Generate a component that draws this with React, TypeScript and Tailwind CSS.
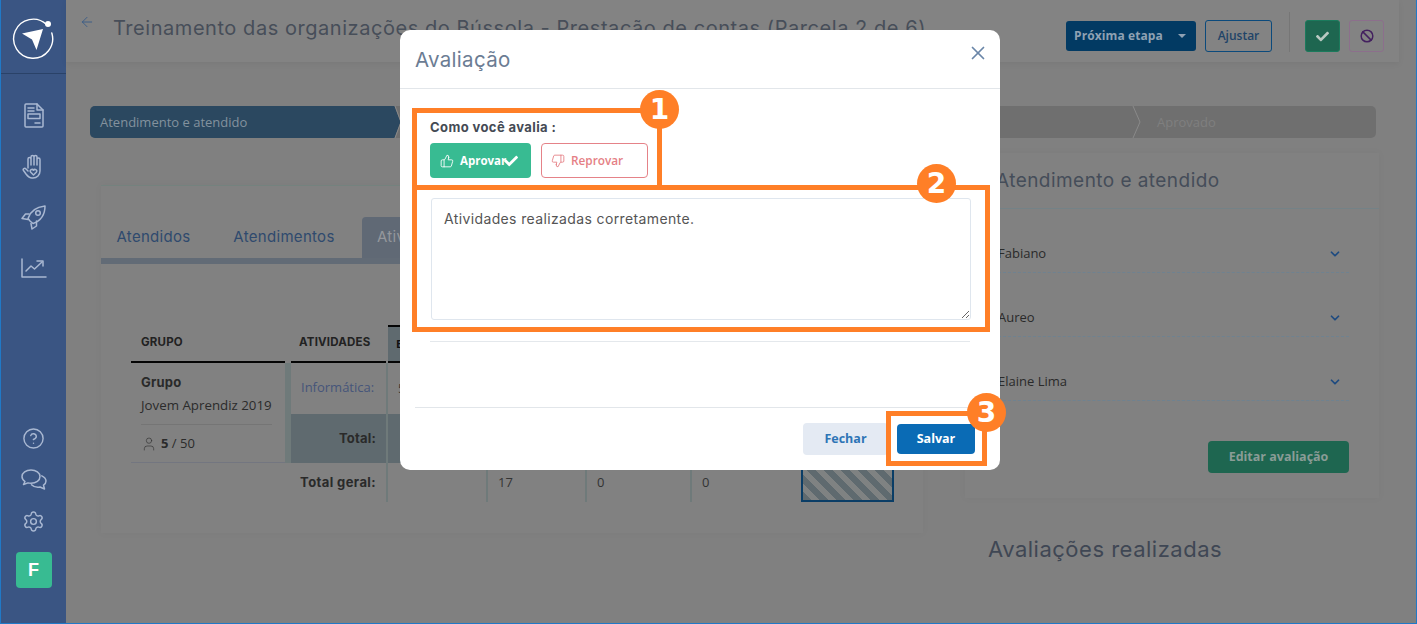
import React from 'react';
import { ArrowLeft, Ban, ChevronDown, CircleHelp, Settings, ThumbsDown, ThumbsUp, User, X } from 'lucide-react';
import { FaCheck } from 'react-icons/fa';

const heading = "font-['Inter',sans-serif]";

function Logo() {
  return (
    <svg className="mr-[2px]" width="44" height="44" viewBox="0 0 44 44" fill="none">
      <path d="M35.5 9.5A19.5 19.5 0 1 0 40.8 18" stroke="#fff" strokeWidth="1.4" strokeLinecap="round" />
      <circle cx="37" cy="9" r="3" fill="#fff" />
      <path d="M11 18.5 32 14 25.5 35 21 24.5z" fill="#fff" />
    </svg>
  );
}

function Sidebar() {
  const stroke = { stroke: '#a9b8d2', strokeWidth: 1.5, fill: 'none', strokeLinecap: 'round', strokeLinejoin: 'round' } as const;
  return (
    <aside className="flex w-[65px] shrink-0 flex-col items-center bg-[#3a5583]">
      <div className="flex h-[74px] w-full items-start justify-center border-b border-[#2a4268] pt-[15px]">
        <Logo />
      </div>
      <div className="mt-[29px] flex w-full flex-col items-center">
        <svg width="20" height="25" viewBox="0 0 20 25" {...stroke}>
          <path d="M2 1h11l6 6v16a1 1 0 0 1-1 1H2a1 1 0 0 1-1-1V2a1 1 0 0 1 1-1z" />
          <path d="M13 1v6h6M4 5h6M4 8h6M11 20h5" />
          <rect x="4" y="11" width="12" height="4.5" />
        </svg>
        <svg className="mt-[26px]" width="23" height="25" viewBox="0 0 23 25" {...stroke}>
          <path d="M6 14V5a1.5 1.5 0 0 1 3 0v6M9 11V3a1.5 1.5 0 0 1 3 0v8M12 11V3a1.5 1.5 0 0 1 3 0v8M15 11V5.5a1.5 1.5 0 0 1 3 0V17c0 4-3 7-7 7h-1c-3 0-4.500-2-6-4l-2.500-3.500c-1-1.500 1-3 2.500-1.500L6 17" />
          <path d="M11.500 21l-3-3a1.700 1.700 0 0 1 3-1.700 1.700 1.700 0 0 1 3 1.700z" />
        </svg>
        <svg className="mt-[26px]" width="25" height="25" viewBox="0 0 25 25" {...stroke}>
          <path d="M9 16l-2-2.500C9 7 15 2 24 1c0 9-5 15-12 17.500z" />
          <circle cx="17" cy="8" r="2.300" />
          <path d="M8 9H4.500L1 13.500l6 1M15.500 16v5l-4.500 3-1-5.500" />
        </svg>
        <svg className="mt-[28px]" width="26" height="20" viewBox="0 0 26 20" {...stroke}>
          <path d="M1 1v18h24M5 13l5-5 3.500 3L21 4" />
          <path d="M16 3h6v5" />
        </svg>
      </div>
      <div className="mt-[149px] flex w-full flex-col items-center">
        <CircleHelp size={23} strokeWidth={1.5} color="#a9b8d2" />
        <svg className="mt-[19px]" width="26" height="21" viewBox="0 0 26 21" {...stroke}>
          <path d="M10 1C5 1 1 3.800 1 7.500c0 2 1.200 3.800 3 5l-1.500 3 4.500-1.600c1 .3 2 .4 3 .4 5 0 9-2.900 9-6.800S15 1 10 1z" />
          <path d="M20.800 6.800C23 7.900 25 9.500 25 12c0 1.700-1 3.200-2.500 4.200l1 3.800-4.500-2c-3.500.6-6.500-.3-8.500-2.300" />
        </svg>
        <Settings className="mt-[20px]" size={23} strokeWidth={1.5} color="#a9b8d2" />
        <div className="mt-[19px] flex h-9 w-9 items-center justify-center rounded-[4px] bg-[#38bb92] font-['Liberation_Sans',sans-serif] text-[18px] font-bold text-white">
          F
        </div>
      </div>
    </aside>
  );
}

function Header() {
  return (
    <header className="relative flex h-[62px] w-[1333px] bg-[#838383] shadow-[0_2px_6px_rgba(0,0,0,0.06)]">
      <ArrowLeft className="ml-[13px] mt-[14px]" size={16} strokeWidth={1.2} color="#2f5588" />
      <h1 className={`${heading} ml-[18px] mt-[13px] h-[30px] w-[860px] whitespace-nowrap text-[20px] leading-[30px] tracking-[0.55px] text-[#474e59]`}>
        Treinamento das organizações do Bússola - Prestação de contas (Parcela 2 de 6)
      </h1>
      <div className="ml-[93px] mt-[21px] flex h-[30px] w-[130px] items-center rounded-[3px] bg-[#023a63] pl-2 font-['Open_Sans',sans-serif] text-[12px] font-bold tracking-[0.1px] text-[#8fa1b3]">
        Próxima etapa
        <span className="ml-[15px] h-0 w-0 border-x-[4px] border-t-[4px] border-x-transparent border-t-[#8fa1b3]" />
      </div>
      <div className="ml-[9px] mt-[20px] flex h-8 w-[67px] items-center justify-center rounded-[3px] border border-[#0b4a7c] font-['Open_Sans',sans-serif] text-[12px] font-semibold text-[#1f4468]">
        Ajustar
      </div>
      <div className="ml-[17px] mt-3 h-10 w-px bg-[#767676]" />
      <div className="ml-[15px] mt-[20px] flex h-8 w-[35px] items-center justify-center rounded-[3px] border border-[#1b7a5c] bg-[#1e6650]">
        <FaCheck size={13} color="#b9c9c2" />
      </div>
      <div className="ml-[9px] mt-[20px] flex h-8 w-[35px] items-center justify-center rounded-[3px] border border-[#8c6f8c]">
        <Ban size={14} strokeWidth={2.5} color="#43205f" />
      </div>
    </header>
  );
}

function Stepper() {
  return (
    <div className="relative flex h-8 w-[1286px] items-center rounded-[5px] bg-[#6f6f6f] font-['Open_Sans',sans-serif] text-[13px]">
      <div className="flex h-full w-[304px] items-center rounded-l-[5px] bg-[#2b4860] pl-[10px] pt-px text-[#83929e]">Atendimento e atendido</div>
      <span className="ml-[763px] pt-px text-[#7f7f7f]">Aprovado</span>
      {/* arrow tip of the active step and the divider of the last one */}
      <svg className="absolute left-[304px] top-0" width="8" height="32" viewBox="0 0 8 32">
        <path d="M0 0h.5l6 16-6 16H0z" fill="#2b4860" />
        <path d="M1 0l6 16-6 16" fill="none" stroke="#8a8a8a" />
      </svg>
      <svg className="absolute left-[1042px] top-0" width="10" height="32" viewBox="0 0 10 32" fill="none">
        <path d="M1 0l7 16-7 16" stroke="#8a8a8a" />
      </svg>
    </div>
  );
}

function ResultsTable() {
  const line = 'border-l-2 border-[#6f7a7a]';
  const dark = 'text-[#2a2a2a]';
  return (
    <div className="ml-[30px] grid grid-cols-[154px_6px_95px_100px_99px_105px_111px_93px] grid-rows-[38px_51px_49px_39px] font-['Open_Sans',sans-serif] text-[13px]">
      <div className={`${heading} flex items-center self-stretch border-b-2 border-[#050505] pl-[10px] text-[11.5px] font-bold tracking-[0.2px] text-[#222]`}>GRUPO</div>
      <div />
      <div className={`${heading} flex items-center border-b-2 border-[#050505] pl-2 text-[11.5px] font-bold tracking-[0.2px] text-[#222]`}>ATIVIDADES</div>
      <div className="ml-[2px] flex items-center border-y-2 border-[#050505] bg-[#5f6a6f] pl-2 text-[11px] font-bold text-[#111]">ENTREGUES</div>
      <div className="border-y-2 border-[#050505] bg-[#5f6a6f]" />
      <div className="border-y-2 border-[#050505] bg-[#5f6a6f]" />
      <div className="border-y-2 border-[#050505] bg-[#5f6a6f]" />
      <div className="border-y-2 border-[#050505] bg-[#5f6a6f]" />

      <div className="row-span-2 flex flex-col border-b border-[#737680] pl-[10px] pt-[10px]">
        <div className={`${heading} text-[13px] font-bold leading-[18px] tracking-[0.2px] ${dark}`}>Grupo</div>
        <div className="mt-[5px] text-[13.3px] leading-[18px] text-[#2b2b2b]">Jovem Aprendiz 2019</div>
        <div className="mt-[10px] w-[131px] border-t border-[#757575]" />
        <div className="mt-[9px] flex items-center text-[13px] text-[#2b2b2b]">
          <User size={16} strokeWidth={1} color="#333" />
          <span className="ml-[4px] font-bold">5</span>
          <span>&nbsp;/ 50</span>
        </div>
      </div>
      <div className="row-span-2 bg-[#6f7a7a]" />
      <div className="flex items-center pb-[2px] pl-[10px] text-[#46557a]">Informática:</div>
      <div className={`${line} flex items-center pl-[10px] text-[#333]`}>5</div>
      <div className={line} />
      <div className={line} />
      <div className={line} />
      <div />

      <div className={`${heading} flex items-center justify-end bg-[#5f6a6f] pr-[10px] text-[13px] font-bold tracking-[0.2px] ${dark}`}>Total:</div>
      <div className={`${line} bg-[#5f6a6f]`} />
      <div className={`${line} bg-[#5f6a6f]`} />
      <div className={`${line} bg-[#5f6a6f]`} />
      <div className={`${line} bg-[#5f6a6f]`} />
      <div className="bg-[#5f6a6f]" />

      <div />
      <div />
      <div className={`${heading} flex items-center justify-end whitespace-nowrap pr-[10px] text-[13px] font-bold tracking-[0.4px] ${dark}`}>Total geral:</div>
      <div className={line} />
      <div className={`${line} flex items-center pl-[10px] text-[#333]`}>17</div>
      <div className={`${line} flex items-center pl-[10px] text-[#333]`}>0</div>
      <div className={`${line} flex items-center pl-[10px] text-[#333]`}>0</div>
      <div className="border-2 border-[#0a3d66] bg-[repeating-linear-gradient(45deg,#5f6a6f_0,#5f6a6f_6px,#7f8282_6px,#7f8282_12px)]" />
    </div>
  );
}

function LeftColumn() {
  return (
    <section className="ml-[11px] w-[822px] pt-[32px]">
      <div className="border-t border-[#74827e] bg-[#818181] pb-[31px] pt-[31px] shadow-[0_0_8px_rgba(0,0,0,0.04)]">
        <div className={`${heading} flex h-[41px] gap-[11px] text-[15px] tracking-[0.3px] text-[#2f4a6e]`}>
          <div className="flex w-[105px] items-center justify-center">Atendidos</div>
          <div className="flex w-[134px] items-center justify-center">Atendimentos</div>
          <div className="flex w-[150px] items-center rounded-t-[4px] bg-[#606975] pl-[15px] text-[#94979c]">Atividades</div>
        </div>
        <div className="mb-[61px] h-[6px] bg-[#626b76]" />
        <ResultsTable />
      </div>
    </section>
  );
}

function RightColumn() {
  const people = ['Fabiano', 'Aureo', 'Elaine Lima'];
  return (
    <section className="ml-[42px] w-[414px]">
      <div className="flex h-[345px] flex-col bg-[#818181] shadow-[0_0_8px_rgba(0,0,0,0.04)]">
        <h2 className={`${heading} flex h-[56px] shrink-0 items-center border-b border-[#748287] pl-[31px] pt-[2px] text-[19px] tracking-[0.45px] text-[#454d59]`}>
          Atendimento e atendido
        </h2>
        {people.map((name) => (
          <div key={name} className="ml-[33px] flex h-[64px] w-[351px] shrink-0 items-center justify-between border-b border-dashed border-[#6f8290] pr-[7px] pt-[27px] font-['Open_Sans',sans-serif] text-[13px] text-[#2a2a2a]">
            {name}
            <ChevronDown size={14} strokeWidth={3} color="#1d4a80" />
          </div>
        ))}
        <div className="ml-[243px] mt-[40px] flex h-8 w-[141px] items-center justify-center rounded-[4px] bg-[#1e6650] pt-px font-['Open_Sans',sans-serif] text-[12.5px] font-bold text-[#8a9c96]">
          Editar avaliação
        </div>
      </div>
      <h2 className={`${heading} ml-[23px] mt-[36px] text-[22px] leading-[30px] tracking-[0.5px] text-[#3f4754]`}>Avaliações realizadas</h2>
    </section>
  );
}

function Badge({ n, className }: { n: number; className: string }) {
  return (
    <div className={`absolute flex h-[39px] w-[39px] items-center justify-center rounded-full bg-[#ff7f27] font-['DejaVu_Sans',sans-serif] text-[28px] font-bold text-white ${className}`}>
      {n}
    </div>
  );
}

function Modal() {
  return (
    <div className="relative flex h-[440px] w-[600px] flex-col rounded-[10px] bg-white font-['Open_Sans',sans-serif]">
      <div className="flex h-[59px] shrink-0 items-center justify-between border-b border-[#e2e6ea] pl-[15px] pr-[11px]">
        <h3 className={`${heading} pt-[2px] text-[20.5px] tracking-[0.3px] text-[#6b7c93]`}>Avaliação</h3>
        <X size={22} strokeWidth={1.9} color="#6a86a8" className="mb-[12px]" />
      </div>
      <div className="shrink-0 px-[30px] pt-[30px]">
        <div className={`${heading} h-4 text-[13px] font-bold leading-4 tracking-[0.4px] text-[#444a54]`}>Como você avalia :</div>
        <div className="mt-2 flex gap-[10px]">
          <div className="relative flex h-[35px] w-[101px] items-center rounded-[4px] bg-[#38bb92] pl-[10px] text-[11.5px] font-bold text-white">
            <ThumbsUp size={14} strokeWidth={1.5} />
            <span className="ml-[6px]">Aprovar</span>
            <FaCheck size={14} className="absolute left-[74px] top-[11px]" />
          </div>
          <div className="flex h-[35px] w-[107px] items-center rounded-[4px] border border-[#e58288] pl-[9px] text-[11.8px] font-semibold text-[#e57f85]">
            <ThumbsDown size={14} strokeWidth={1.5} />
            <span className="ml-[6px]">Reprovar</span>
          </div>
        </div>
        <textarea
          readOnly
          defaultValue="Atividades realizadas corretamente."
          className={`${heading} ml-px mt-5 block h-[122px] w-[540px] rounded-[3px] border border-[#dfe6ee] px-3 py-[9px] text-[14px] tracking-[0.37px] text-[#555] outline-none`}
        />
        <div className="mt-[21px] border-t border-[#e4e8ec]" />
      </div>
      <div className="mt-auto ml-[15px] flex h-[63px] shrink-0 items-start justify-end gap-[9px] border-t border-[#e2e6ea] pr-[25px] pt-[15px] text-[12.5px] font-bold">
        <div className="flex h-8 w-[85px] items-center justify-center rounded-[4px] bg-[#e4eaf3] pt-px text-[#2e75b6]">Fechar</div>
        <div className="mt-px flex h-[30px] w-[78px] items-center justify-center rounded-[4px] bg-[#0a6bb5] pt-px text-white">Salvar</div>
      </div>

      <div className="absolute left-[12px] top-[78px] h-[82px] w-[250px] border-[5px] border-[#ff7f27]" />
      <div className="absolute left-[12px] top-[155px] h-[147px] w-[578px] border-[5px] border-[#ff7f27]" />
      <div className="absolute left-[486px] top-[381px] h-[55px] w-[101px] border-[5px] border-[#ff7f27]" />
      <Badge n={1} className="left-[240px] top-[60px]" />
      <Badge n={2} className="left-[517px] top-[134px]" />
      <Badge n={3} className="left-[567px] top-[363px]" />
    </div>
  );
}

export default function App() {
  return (
    <div className="relative flex h-[624px] w-[1417px] overflow-hidden border-x border-b border-[#2079c7] bg-[#808080]">
      <Sidebar />
      <main className="flex-1">
        <Header />
        <div className="pl-[24px] pt-[44px]">
          <Stepper />
          <div className="mt-[15px] flex items-start">
            <LeftColumn />
            <RightColumn />
          </div>
        </div>
      </main>
      {/* modal sits over the dimmed page */}
      <div className="absolute left-[399px] top-[30px]">
        <Modal />
      </div>
    </div>
  );
}
